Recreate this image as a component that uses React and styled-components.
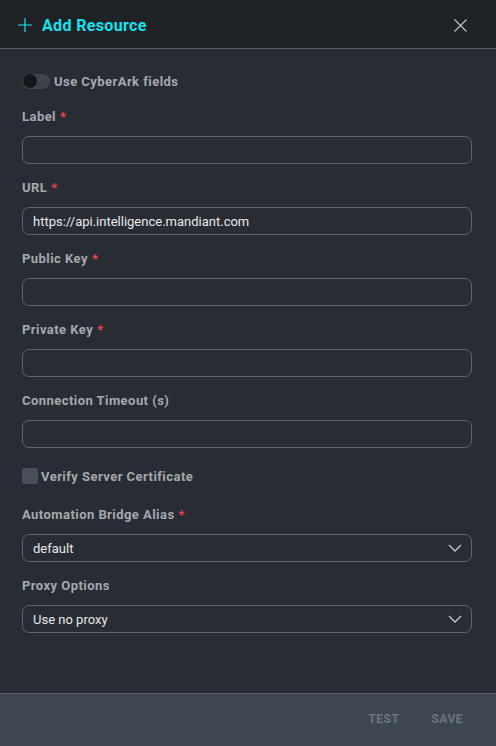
import React from 'react';
import styled, { createGlobalStyle } from 'styled-components';

const Global = createGlobalStyle`
  html, body { margin: 0; padding: 0; background: #282c34; }
  body { font-family: Roboto, "Liberation Sans", sans-serif; }
  * { box-sizing: border-box; }
`;

const Dialog = styled.div`
  display: flex;
  flex-direction: column;
  height: 746px;
  width: 496px;
  background: #282c34;
`;

const Header = styled.div`
  height: 49px;
  flex-shrink: 0;
  background: #1e2126;
  border-bottom: 1px solid #565b62;
  display: flex;
  align-items: center;
  justify-content: space-between;
  padding: 2px 29px 0 18px;
`;

const Title = styled.div`
  display: flex;
  align-items: center;
  gap: 10px;
  color: #14e3ef;
  font-size: 16px;
  font-weight: 700;
  letter-spacing: 0.35px;
`;

const CloseButton = styled.button`
  background: none;
  border: none;
  padding: 0;
  display: flex;
  cursor: pointer;
`;

const Body = styled.div`
  flex: 1;
  padding: 24px 24px 0 22px;
  display: flex;
  flex-direction: column;
`;

const ToggleRow = styled.label`
  display: flex;
  align-items: center;
  gap: 4px;
  height: 16px;
  margin-bottom: 20px;
  color: #a5a9ae;
  font-size: 13px;
  font-weight: 700;
  letter-spacing: 0.45px;
`;

const Track = styled.span`
  width: 28px;
  height: 15px;
  border-radius: 8px;
  background: #3e444c;
  position: relative;
  display: inline-block;
`;

const Knob = styled.span`
  position: absolute;
  left: 1px;
  top: 0.5px;
  width: 14px;
  height: 14px;
  border-radius: 50%;
  background: #141619;
`;

const Field = styled.div`
  display: flex;
  flex-direction: column;
  margin-bottom: 16px;
`;

const Label = styled.div`
  height: 16px;
  line-height: 16px;
  margin-bottom: 11px;
  color: #a5a9ae;
  font-size: 13px;
  font-weight: 700;
  letter-spacing: 0.45px;
`;

const Req = styled.span`
  color: #f0454d;
  margin-left: 4px;
`;

const Input = styled.input`
  height: 28px;
  width: 100%;
  border: 1px solid #5d646c;
  border-radius: 7px;
  background: transparent;
  color: #e8e9ea;
  font-family: Roboto, "Liberation Sans", sans-serif;
  font-size: 13px;
  padding: 0 10px;
  outline: none;
`;

const Select = styled.div`
  height: 28px;
  border: 1px solid #5d646c;
  border-radius: 7px;
  color: #e8e9ea;
  font-size: 13px;
  padding: 0 9px 0 10px;
  display: flex;
  align-items: center;
  justify-content: space-between;
`;

const CheckRow = styled.label`
  display: flex;
  align-items: center;
  gap: 3px;
  height: 24px;
  margin-bottom: 19px;
  color: #a5a9ae;
  font-size: 13px;
  font-weight: 700;
  letter-spacing: 0.45px;
`;

const Box = styled.span`
  width: 16px;
  height: 16px;
  border-radius: 3px;
  background: #4a5059;
`;

const Footer = styled.div`
  height: 53px;
  flex-shrink: 0;
  background: #3e4650;
  border-top: 1px solid #596068;
  display: flex;
  justify-content: flex-end;
  align-items: center;
  gap: 32px;
  padding: 0 33px 2px 0;
`;

const FooterButton = styled.button`
  background: none;
  border: none;
  padding: 0;
  color: #6c7580;
  font-family: Roboto, "Liberation Sans", sans-serif;
  font-size: 12px;
  font-weight: 700;
  letter-spacing: 0.5px;
`;

const Chevron = () => (
  <svg width="14" height="8" viewBox="0 0 14 8" fill="none">
    <path d="M1 1l6 6 6-6" stroke="#c9cbce" strokeWidth="1.3" />
  </svg>
);

const fields = [
  { label: 'Label', required: true, value: '' },
  { label: 'URL', required: true, value: 'https://api.intelligence.mandiant.com' },
  { label: 'Public Key', required: true, value: '' },
  { label: 'Private Key', required: true, value: '' },
  { label: 'Connection Timeout (s)', required: false, value: '' },
];

const selects = [
  { label: 'Automation Bridge Alias', required: true, value: 'default' },
  { label: 'Proxy Options', required: false, value: 'Use no proxy' },
];

export default function App() {
  return (
    <Dialog>
      <Global />
      <Header>
        <Title>
          <svg width="14" height="14" viewBox="0 0 14 14">
            <path d="M7 0v14M0 7h14" stroke="#14e3ef" strokeWidth="1.2" />
          </svg>
          Add Resource
        </Title>
        <CloseButton>
          <svg width="13" height="13" viewBox="0 0 13 13">
            <path d="M0.5 0.5l12 12M12.5 0.5l-12 12" stroke="#c4c6c9" strokeWidth="1.1" />
          </svg>
        </CloseButton>
      </Header>
      <Body>
        <ToggleRow>
          <Track><Knob /></Track>
          Use CyberArk fields
        </ToggleRow>
        {fields.map((f) => (
          <Field key={f.label}>
            <Label>{f.label}{f.required && <Req>*</Req>}</Label>
            <Input defaultValue={f.value} />
          </Field>
        ))}
        <CheckRow>
          <Box />
          Verify Server Certificate
        </CheckRow>
        {selects.map((s) => (
          <Field key={s.label}>
            <Label>{s.label}{s.required && <Req>*</Req>}</Label>
            <Select>{s.value}<Chevron /></Select>
          </Field>
        ))}
      </Body>
      <Footer>
        <FooterButton>TEST</FooterButton>
        <FooterButton>SAVE</FooterButton>
      </Footer>
    </Dialog>
  );
}
